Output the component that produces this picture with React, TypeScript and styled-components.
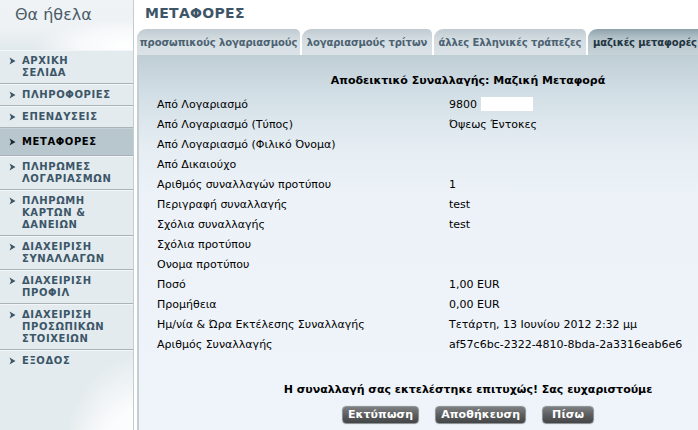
import React from "react";
import styled, { createGlobalStyle } from "styled-components";

const GlobalStyle = createGlobalStyle`
  html, body { margin: 0; padding: 0; overflow: hidden; background: #ffffff; }
  body { font-family: "DejaVu Sans", Verdana, "Noto Sans", sans-serif; }
`;

const Page = styled.div`
  display: flex;
  width: 698px;
  height: 430px;
  overflow: hidden;
  background: #ffffff;
`;

const Sidebar = styled.nav`
  width: 133px;
  flex-shrink: 0;
  border-right: 1px solid #c3ccd1;
  display: flex;
  flex-direction: column;
  background:
    radial-gradient(ellipse 80px 120px at 140px 475px, rgba(255,255,255,0.95) 0%, rgba(255,255,255,0.85) 55%, rgba(255,255,255,0) 100%),
    linear-gradient(#e4ebee, #e4ebee);
`;

const SideHeader = styled.div`
  height: 50px;
  box-sizing: border-box;
  padding: 5px 0 0 15px;
  font-size: 16px;
  color: #4a5c68;
  background:
    radial-gradient(ellipse 90px 26px at 125px 46px, rgba(255,255,255,1) 0%, rgba(255,255,255,0.7) 50%, rgba(255,255,255,0) 100%),
    linear-gradient(#eff3f5 0%, #eef2f4 55%, #e2e9ed 100%);
`;

const Menu = styled.ul`
  list-style: none;
  margin: 0;
  padding: 0;
`;

const MenuItem = styled.li<{ $active?: boolean }>`
  display: flex;
  align-items: flex-start;
  gap: 6px;
  padding: ${(p) => (p.$active ? "8px 4px 7px 9px" : "5px 4px 4px 9px")};
  border-bottom: 1px solid #a9b4ba;
  box-shadow: inset 0 1px 0 ${(p) => (p.$active ? "#c6d1d6" : "#f3f6f8")};
  background: ${(p) => (p.$active ? "#b8c6cd" : "transparent")};
  color: ${(p) => (p.$active ? "#000000" : "#3b5668")};
  font-size: 10px;
  font-weight: bold;
  line-height: 12px;
  letter-spacing: 0.6px;
  &:last-child { border-bottom: none; }
`;

const Chevron = styled.svg`
  width: 7px;
  height: 8px;
  margin-top: 2px;
  flex-shrink: 0;
`;

const Main = styled.main`
  width: 660px;
  flex-shrink: 0;
  margin-left: 3px;
  display: flex;
  flex-direction: column;
`;

const Title = styled.h1`
  margin: 0;
  height: 29px;
  box-sizing: border-box;
  padding: 5px 0 0 8px;
  font-size: 14px;
  font-weight: bold;
  color: #3d5567;
  letter-spacing: 0.3px;
`;

const TabRow = styled.div`
  display: flex;
  gap: 2px;
  height: 26px;
`;

const Tab = styled.div<{ $w: number; $active?: boolean; $left?: boolean }>`
  width: ${(p) => p.$w}px;
  flex-shrink: 0;
  box-sizing: border-box;
  padding: 8px 0 0 ${(p) => (p.$left ? 5 : 0)}px;
  text-align: ${(p) => (p.$left ? "left" : "center")};
  font-size: 10px;
  font-weight: bold;
  letter-spacing: -0.1px;
  white-space: nowrap;
  border-radius: 9px 5px 0 0;
  color: ${(p) => (p.$active ? "#22343f" : "#4b6272")};
  background: ${(p) =>
    p.$active
      ? "linear-gradient(#8ea2ac 0%, #b4c3ca 35%, #c6d3d9 100%)"
      : "linear-gradient(#bfcbd1 0%, #d3dce1 40%, #dbe3e7 100%)"};
`;

const Panel = styled.section`
  flex: 1;
  border-left: 2px solid #c3cdd2;
  padding-top: 17px;
  background: linear-gradient(#bfcdd5 0px, #d3dfe6 40px, #e6eef3 95px, #ecf2f7 140px, #eef4f9 100%);
`;

const Heading = styled.h2`
  margin: 0 0 4px 0;
  text-align: center;
  font-size: 11px;
  line-height: 18px;
  font-weight: bold;
  color: #000000;
`;

const Grid = styled.dl`
  display: grid;
  grid-template-columns: 292px 1fr;
  grid-auto-rows: 20px;
  margin: 0;
  padding-left: 18px;
  font-size: 11px;
  color: #000000;
  align-items: center;
`;

const Label = styled.dt`
  margin: 0;
  white-space: nowrap;
`;

const Value = styled.dd`
  margin: 0;
  white-space: nowrap;
  display: flex;
  align-items: center;
`;

const Mask = styled.span`
  display: inline-block;
  width: 52px;
  height: 14px;
  margin-left: 4px;
  background: #ffffff;
`;

const Message = styled.p`
  margin: 28px 0 8px 0;
  text-align: center;
  font-size: 11px;
  line-height: 16px;
  font-weight: bold;
  color: #000000;
`;

const Buttons = styled.div`
  display: flex;
  justify-content: center;
  gap: 16px;
`;

const Button = styled.button`
  height: 18px;
  min-width: 52px;
  padding: 0 5px;
  box-sizing: border-box;
  border: 1px solid #8d9397;
  border-radius: 4px;
  background: linear-gradient(#7d7f80 0%, #5b5d5e 50%, #434546 100%);
  color: #ffffff;
  font-family: "DejaVu Sans", Verdana, sans-serif;
  font-size: 11px;
  font-weight: bold;
  letter-spacing: 0.1px;
  line-height: 14px;
  cursor: pointer;
  box-shadow: 0 0 0 1px #e6edf1;
`;

const menu: { lines: string[]; active?: boolean }[] = [
  { lines: ["ΑΡΧΙΚΗ", "ΣΕΛΙΔΑ"] },
  { lines: ["ΠΛΗΡΟΦΟΡΙΕΣ"] },
  { lines: ["ΕΠΕΝΔΥΣΕΙΣ"] },
  { lines: ["ΜΕΤΑΦΟΡΕΣ"], active: true },
  { lines: ["ΠΛΗΡΩΜΕΣ", "ΛΟΓΑΡΙΑΣΜΩΝ"] },
  { lines: ["ΠΛΗΡΩΜΗ", "ΚΑΡΤΩΝ &", "ΔΑΝΕΙΩΝ"] },
  { lines: ["ΔΙΑΧΕΙΡΙΣΗ", "ΣΥΝΑΛΛΑΓΩΝ"] },
  { lines: ["ΔΙΑΧΕΙΡΙΣΗ", "ΠΡΟΦΙΛ"] },
  { lines: ["ΔΙΑΧΕΙΡΙΣΗ", "ΠΡΟΣΩΠΙΚΩΝ", "ΣΤΟΙΧΕΙΩΝ"] },
  { lines: ["ΕΞΟΔΟΣ"] },
];

const tabs = [
  { label: "προσωπικούς λογαριασμούς", w: 163 },
  { label: "λογαριασμούς τρίτων", w: 130 },
  { label: "άλλες Ελληνικές τράπεζες", w: 152 },
  { label: "μαζικές μεταφορές", w: 120, active: true, left: true },
];

const rows: [string, React.ReactNode][] = [
  ["Από Λογαριασμό", <>9800<Mask /></>],
  ["Από Λογαριασμό (Τύπος)", "Όψεως Έντοκες"],
  ["Από Λογαριασμό (Φιλικό Όνομα)", ""],
  ["Από Δικαιούχο", ""],
  ["Αριθμός συναλλαγών προτύπου", "1"],
  ["Περιγραφή συναλλαγής", "test"],
  ["Σχόλια συναλλαγής", "test"],
  ["Σχόλια προτύπου", ""],
  ["Ονομα προτύπου", ""],
  ["Ποσό", "1,00 EUR"],
  ["Προμήθεια", "0,00 EUR"],
  ["Ημ/νία & Ώρα Εκτέλεσης Συναλλαγής", "Τετάρτη, 13 Ιουνίου 2012 2:32 μμ"],
  ["Αριθμός Συναλλαγής", "af57c6bc-2322-4810-8bda-2a3316eab6e6"],
];

export default function App() {
  return (
    <>
      <GlobalStyle />
      <Page>
        <Sidebar>
          <SideHeader>Θα ήθελα</SideHeader>
          <Menu>
            {menu.map((m, i) => (
              <MenuItem key={i} $active={m.active}>
                <Chevron viewBox="0 0 7 8">
                  <path d="M0.5 0.5 L6.5 4 L0.5 7.5 L2 4 Z" fill={m.active ? "#1a2a33" : "#3b5668"} />
                </Chevron>
                <span>
                  {m.lines.map((l, j) => (
                    <React.Fragment key={j}>
                      {l}
                      {j < m.lines.length - 1 && <br />}
                    </React.Fragment>
                  ))}
                </span>
              </MenuItem>
            ))}
          </Menu>
        </Sidebar>
        <Main>
          <Title>ΜΕΤΑΦΟΡΕΣ</Title>
          <TabRow>
            {tabs.map((t) => (
              <Tab key={t.label} $w={t.w} $active={t.active} $left={t.left}>
                {t.label}
              </Tab>
            ))}
          </TabRow>
          <Panel>
            <Heading>Αποδεικτικό Συναλλαγής: Μαζική Μεταφορά</Heading>
            <Grid>
              {rows.map(([l, v]) => (
                <React.Fragment key={l}>
                  <Label>{l}</Label>
                  <Value>{v}</Value>
                </React.Fragment>
              ))}
            </Grid>
            <Message>Η συναλλαγή σας εκτελέστηκε επιτυχώς! Σας ευχαριστούμε</Message>
            <Buttons>
              <Button>Εκτύπωση</Button>
              <Button>Αποθήκευση</Button>
              <Button>Πίσω</Button>
            </Buttons>
          </Panel>
        </Main>
      </Page>
    </>
  );
}
